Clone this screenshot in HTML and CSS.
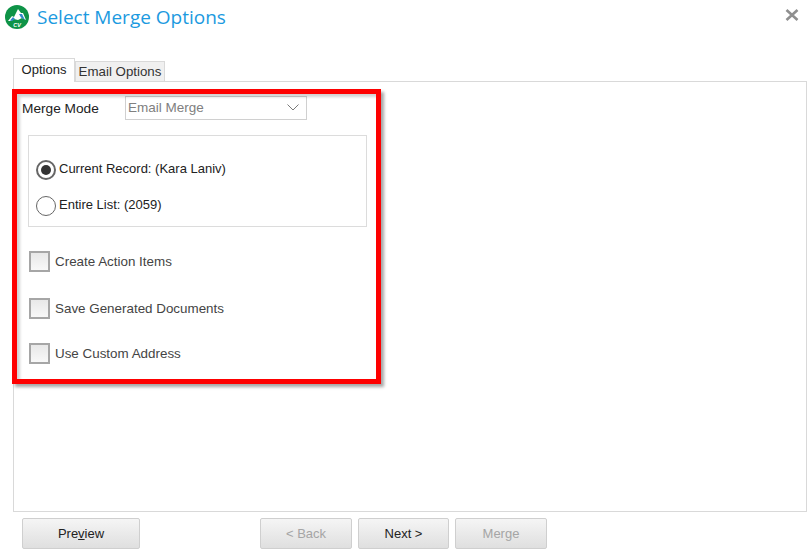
FILE: index.html

```html
<!DOCTYPE html>
<html lang="en">
<head>
    <meta charset="UTF-8">
    <title>Select Merge Options</title>
    <link rel="stylesheet" href="styles.css">
</head>
<body>
    <div class="dialog">
        <header class="title-bar">
            <svg class="logo" viewBox="0 0 24 24" width="24" height="24">
                <circle cx="12" cy="12" r="12" fill="#0e9347"/>
                <path d="M3 16 L7 11 L9 12 L13 4 L16 8 L18 8 L21 15 L17 13 L13 15 L9 14 L6 16 Z" fill="#fff"/>
                <path d="M5 15.500 L8 12 L10 14 L7 16 Z M14 9 L17 9 L20 15 L16 12.500 Z" fill="#2f86c9"/>
                <text x="12" y="21.500" class="logo-text">CV</text>
            </svg>
            <h1 class="title">Select Merge Options</h1>
            <svg class="close" viewBox="0 0 14 12" width="14" height="12">
                <path d="M1.500 1 L12.500 11 M12.500 1 L1.500 11" stroke="#8f8f8f" stroke-width="2.600" fill="none"/>
            </svg>
        </header>

        <nav class="tabs">
            <div class="tab tab-active">Options</div>
            <div class="tab">Email Options</div>
        </nav>

        <main class="panel">
            <div class="mode-row">
                <label class="mode-label">Merge Mode</label>
                <div class="select">
                    <span>Email Merge</span>
                    <svg viewBox="0 0 12 7" width="12" height="7">
                        <path d="M0.500 0.500 L6 6 L11.500 0.500" stroke="#7a7a7a" fill="none"/>
                    </svg>
                </div>
            </div>

            <div class="group">
                <div class="radio-row">
                    <span class="radio radio-checked"></span>
                    <span>Current Record: (Kara Laniv)</span>
                </div>
                <div class="radio-row">
                    <span class="radio"></span>
                    <span>Entire List: (2059)</span>
                </div>
            </div>

            <div class="check-row check-first">
                <span class="checkbox"></span>
                <span>Create Action Items</span>
            </div>
            <div class="check-row check-second">
                <span class="checkbox"></span>
                <span>Save Generated Documents</span>
            </div>
            <div class="check-row check-third">
                <span class="checkbox"></span>
                <span>Use Custom Address</span>
            </div>

            <div class="highlight"></div>
        </main>

        <footer class="buttons">
            <button class="btn btn-preview">Pre<u>v</u>iew</button>
            <button class="btn btn-back" disabled>&lt; Back</button>
            <button class="btn btn-next">Next &gt;</button>
            <button class="btn" disabled>Merge</button>
        </footer>
    </div>
</body>
</html>
```

FILE: styles.css

```css
html, body {
    margin: 0;
    height: 100%;
    background: #fff;
    overflow: hidden;
}

body {
    font-family: "Liberation Sans", Arial, sans-serif;
    font-size: 13px;
    color: #222;
}

.dialog {
    width: 807px;
    height: 553px;
    display: flex;
    flex-direction: column;
}

.title-bar {
    height: 33px;
    padding: 4px 8px 0 5px;
    box-sizing: border-box;
    display: flex;
    align-items: flex-start;
}

.logo {
    flex: none;
    margin-top: 1px;
}

.logo-text {
    font-size: 5.500px;
    font-weight: bold;
    font-style: italic;
    fill: #fff;
    text-anchor: middle;
}

.title {
    margin: 0 0 0 8px;
    font-family: "Open Sans", sans-serif;
    font-size: 19px;
    font-weight: 400;
    line-height: 26px;
    color: #1c9ae0;
    flex: 1;
}

.close {
    margin-top: 5px;
}

.tabs {
    height: 48px;
    padding-left: 13px;
    box-sizing: border-box;
    display: flex;
    align-items: flex-end;
    position: relative;
    z-index: 1;
}

.tab {
    height: 20px;
    width: 90px;
    box-sizing: border-box;
    border: 1px solid #d9d9d9;
    border-bottom: none;
    background: #f0f0f0;
    text-align: center;
    line-height: 20px;
    font-size: 13.300px;
    color: #333;
}

.tab-active {
    height: 24px;
    width: 62px;
    margin-bottom: -1px;
    background: #fff;
    line-height: 22px;
    font-size: 13px;
    color: #222;
}

.panel {
    height: 431px;
    margin-left: 13px;
    box-sizing: border-box;
    border: 1px solid #d9d9d9;
    position: relative;
}

.mode-row {
    margin: 14px 0 0 8px;
    height: 24px;
    display: flex;
    align-items: center;
}

.mode-label {
    width: 103px;
    font-size: 13.700px;
    color: #222;
}

.select {
    width: 182px;
    height: 24px;
    box-sizing: border-box;
    border: 1px solid #d0d0d0;
    padding: 0 7px 2px 2px;
    display: flex;
    align-items: center;
    justify-content: space-between;
    font-size: 13.500px;
    color: #808080;
}

.group {
    width: 339px;
    height: 92px;
    margin: 15px 0 0 14px;
    box-sizing: border-box;
    border: 1px solid #dcdcdc;
    padding-top: 24px;
    display: flex;
    flex-direction: column;
    gap: 16px;
}

.radio-row {
    height: 20px;
    padding-left: 7px;
    display: flex;
    align-items: center;
    gap: 3px;
}

.radio-row span:last-child {
    margin-top: -4px;
}

.radio {
    width: 20px;
    height: 20px;
    box-sizing: border-box;
    border: 1px solid #666;
    border-radius: 50%;
    background: #fff;
    display: block;
}

.radio-checked {
    border: 2px solid #666;
    padding: 3px;
}

.radio-checked::before {
    content: "";
    display: block;
    width: 10px;
    height: 10px;
    border-radius: 50%;
    background: #333;
}

.check-row {
    height: 21px;
    margin-left: 15px;
    display: flex;
    align-items: center;
    gap: 5px;
    font-size: 13.400px;
    color: #444;
}

.check-first {
    margin-top: 24px;
}

.check-second {
    margin-top: 26px;
}

.check-third {
    margin-top: 24px;
}

.checkbox {
    width: 21px;
    height: 21px;
    box-sizing: border-box;
    border: 2px solid #a6a6a6;
    background: linear-gradient(#e8e8e8, #f8f8f8);
}

.highlight {
    position: absolute;
    left: -2px;
    top: 7px;
    width: 369px;
    height: 295px;
    box-sizing: border-box;
    border: 5px solid #fe0000;
    box-shadow: 3px 3px 3px rgba(0, 0, 0, 0.35), inset 3px 3px 3px rgba(0, 0, 0, 0.18);
}

.buttons {
    padding: 6px 0 0 22px;
    display: flex;
    gap: 6px;
}

.btn {
    width: 92px;
    height: 31px;
    box-sizing: border-box;
    border: 1px solid #cfcfcf;
    border-radius: 2px;
    background: linear-gradient(#f5f5f5, #dfdfdf);
    font-family: "Liberation Sans", Arial, sans-serif;
    font-size: 13px;
    color: #222;
    padding: 0;
}

.btn:disabled {
    color: #a5a5a5;
}

.btn-preview {
    width: 118px;
}

.btn-back {
    margin-left: 114px;
}

.btn-next {
    width: 91px;
}
```
